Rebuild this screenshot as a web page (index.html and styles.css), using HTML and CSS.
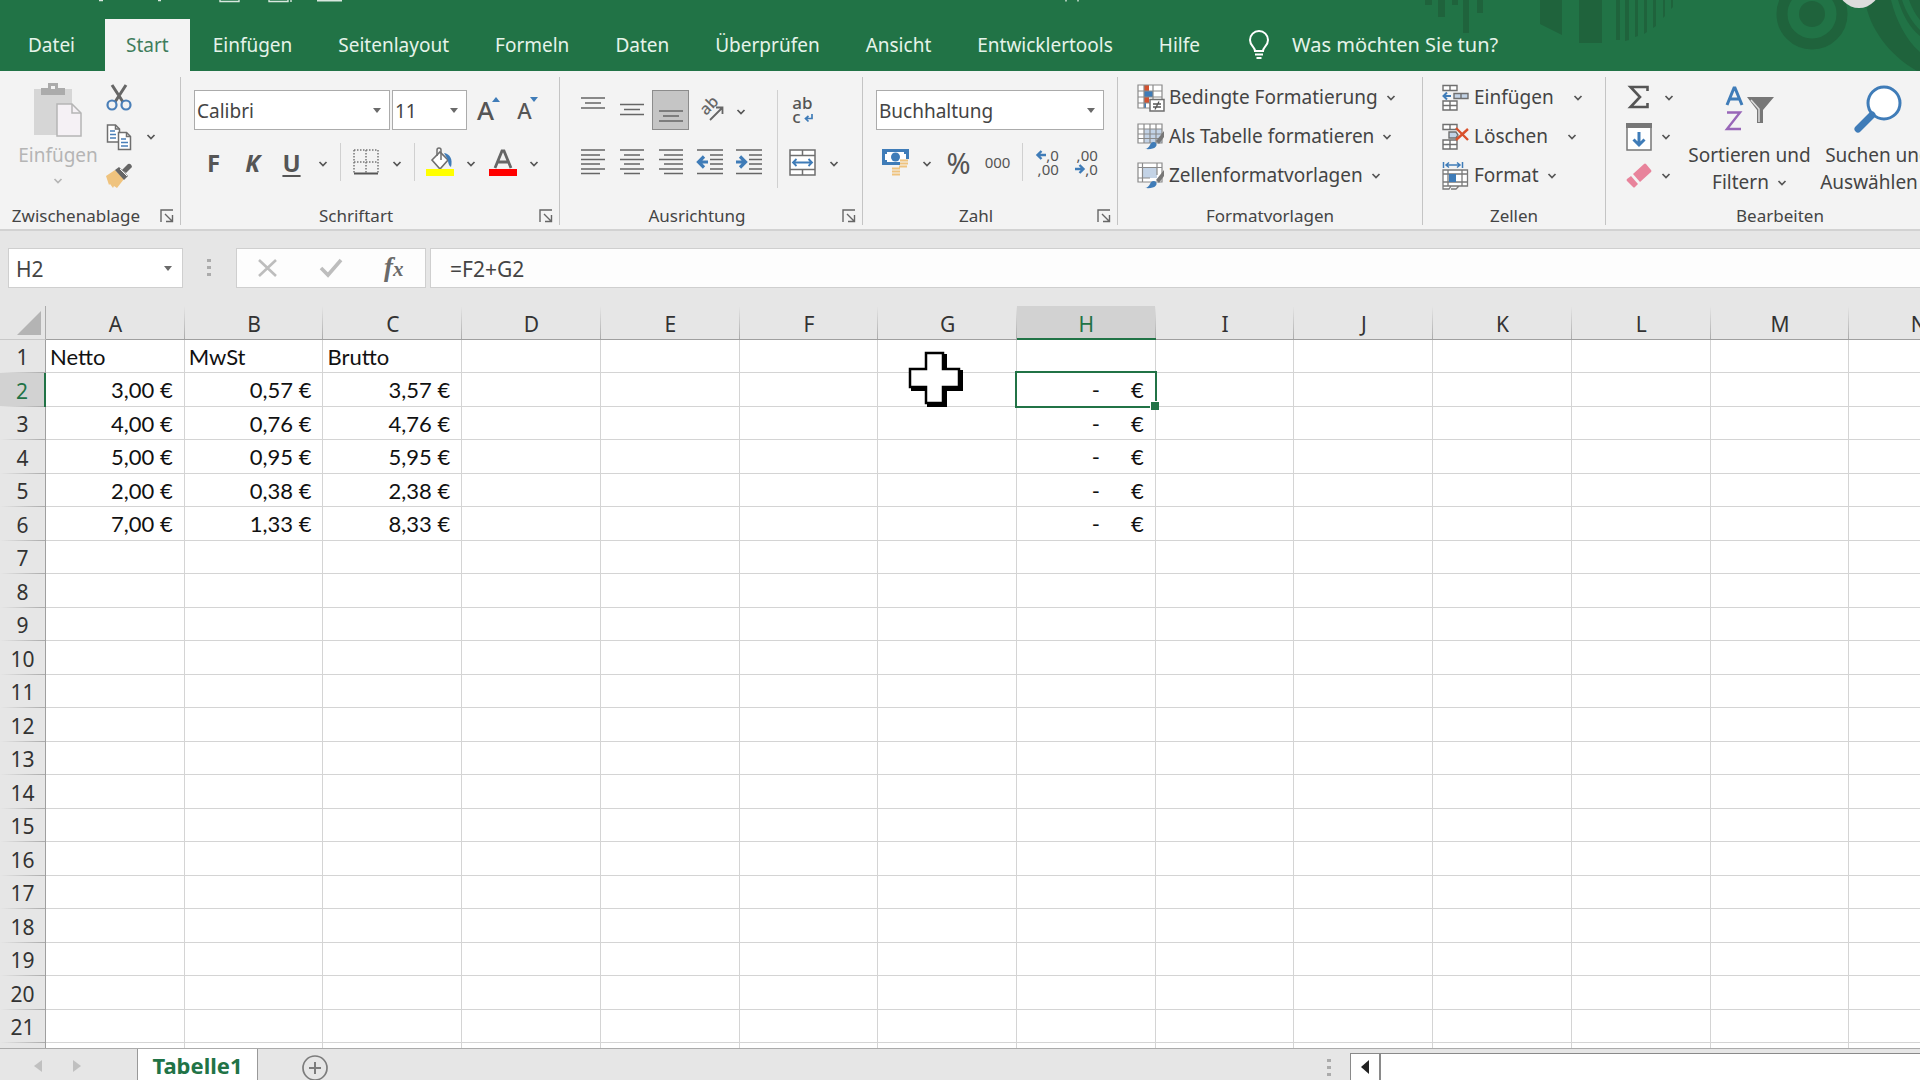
FILE: index.html
```html
<!DOCTYPE html>
<html lang="de">
<head>
<meta charset="utf-8">
<title>Excel</title>
<link rel="stylesheet" href="styles.css">
</head>
<body>
<svg class="defs" aria-hidden="true">
  <symbol id="chev" viewBox="0 0 10 8"><path d="M1.5 2 5 5.5 8.5 2" fill="none" stroke="currentColor" stroke-width="1.7"/></symbol>
  <symbol id="launch" viewBox="0 0 14 14"><path d="M1 13V1h12M5 5l7 7M12.500 6v6.500H6" fill="none" stroke="#666" stroke-width="1.400"/></symbol>
  <symbol id="tablebrush" viewBox="0 0 28 28">
    <path d="M8 26c2 0 4-2 5-4 1-3 4-4 6-2 2 3-1 7-11 6z" fill="#3f7cb8"/>
    <path d="M19 18 27 8v6l-5 7z" fill="#767676"/>
  </symbol>
</svg>

<header class="top">
  <svg class="art" viewBox="0 0 520 71" width="520" height="71" aria-hidden="true">
    <g fill="#1f633c">
      <path d="M25 0h7v5h-7zM38 0h7v17h-7zM52 0h6v5h-6zM63 0h6v33h-6zM77 0h6v13h-6zM140 0h22v35l-22-11zM179 0h23v43h-23zM216 0h4v40h-4zM225 0h4v40l-4 1zM235 0h3v36l-3 1zM244 0h3v32l-3 2zM253 0h3v26l-3 2zM263 0h2v16l-2 2zM271 0h2v7l-2 2z"/>
      <circle cx="412" cy="14" r="13"/>
      <path d="M465 0c4 28 24 55 52 71h3V52C506 40 496 20 491 0z"/>
      <path d="M498 0c5 16 12 28 22 36v-6c-8-8-14-18-18-30zM509 0c3 8 6 14 11 20V0z"/>
    </g>
    <circle cx="412" cy="14" r="30" fill="none" stroke="#1f633c" stroke-width="11"/>
    <circle cx="459" cy="-13" r="21" fill="#dcdcdc"/>
  </svg>
  <svg class="titlebits" viewBox="0 0 1100 3" width="1100" height="3" aria-hidden="true">
    <path d="M99 .5h4M158 .5h3M220 0v1.500h19V0M269 0v1.500h19V0M291 0v2M317 .8h25M1066 0v1.500M1078 0v1.500" fill="none" stroke="#d9e8df" stroke-width="1.400"/>
  </svg>
  <nav class="tabs">
    <a class="tab file" href="#">Datei</a>
    <a class="tab active" href="#">Start</a>
    <a class="tab" href="#">Einfügen</a>
    <a class="tab" href="#">Seitenlayout</a>
    <a class="tab" href="#">Formeln</a>
    <a class="tab" href="#">Daten</a>
    <a class="tab" href="#">Überprüfen</a>
    <a class="tab" href="#">Ansicht</a>
    <a class="tab" href="#">Entwicklertools</a>
    <a class="tab" href="#">Hilfe</a>
    <button class="tell" type="button">
      <svg width="22" height="30" viewBox="0 0 22 30"><path d="M7 21c0-4-5-5-5-11a9 9 0 0 1 18 0c0 6-5 7-5 11zM7 24.500h8M8.500 28h5" fill="none" stroke="#fff" stroke-width="2"/></svg>
      Was möchten Sie tun?
    </button>
  </nav>
</header>

<section class="ribbon">
  <div class="group clip">
    <div class="body flush">
      <button class="big paste" type="button" disabled>
        <span class="bigicon"><svg width="48" height="54" viewBox="0 0 48 54"><path d="M0 6h38v46H0z" fill="#d6d6d6"/><path d="M7 5h7V0h10v5h7v7H7z" fill="#ababab"/><path d="M17 3h4v3h-4z" fill="#f3f3f3"/><path d="M23 21h15l9 9v23H23z" fill="#f5f1f5" stroke="#b5b5b5" stroke-width="1.500"/><path d="M38 21v9h9" fill="none" stroke="#b5b5b5" stroke-width="1.500"/></svg></span>
        <span>Einfügen</span>
        <svg class="chev" width="10" height="8"><use href="#chev"/></svg>
      </button>
      <div class="stack">
        <div class="line">
          <button class="tool slim" type="button" aria-label="Ausschneiden"><svg width="26" height="28" viewBox="0 0 26 28"><path d="M6 1 17 18M20 1 9 18" stroke="#666" stroke-width="3"/><circle cx="6" cy="21" r="4.500" fill="none" stroke="#4a7fb8" stroke-width="2.200"/><circle cx="20" cy="21" r="4.500" fill="none" stroke="#4a7fb8" stroke-width="2.200"/></svg></button>
        </div>
        <div class="line">
          <button class="tool slim" type="button" aria-label="Kopieren"><svg width="26" height="28" viewBox="0 0 26 28"><g fill="#fff" stroke="#6f6f6f" stroke-width="1.500"><path d="M1.500 2h8l4 4v13h-12z"/><path d="M12.500 9.500h8l4 4v13h-12z"/><path d="M9.500 2v4h4M20.500 9.500v4h4" fill="none"/></g><path d="M4 8h5M4 11.500h6M4 15h6M15 16h5M15 19.500h7M15 23h7" stroke="#4a7fb8" stroke-width="1.500"/></svg></button>
          <button class="drop copy" type="button" aria-label="Kopieroptionen"><svg class="chev" width="10" height="8"><use href="#chev"/></svg></button>
        </div>
        <div class="line">
          <button class="tool slim" type="button" aria-label="Format übertragen"><svg width="26" height="26" viewBox="0 0 26 26"><path d="M0 13 9 7l9 9-7 9-3-2-1 2-3-4-1 1z" fill="#efc37e"/><path d="m9 7 4-3 9 9-4 4z" fill="#666"/><path d="m16 7 6-6q3-1 4 3l-6 6z" fill="#666"/><path d="m14 6 7 7" stroke="#f3f3f3" stroke-width="1"/></svg></button>
        </div>
      </div>
    </div>
    <div class="foot"><span>Zwischenablage</span><button type="button" aria-label="Zwischenablage öffnen"><svg width="14" height="14"><use href="#launch"/></svg></button></div>
  </div>

  <div class="group font">
    <div class="body">
      <div class="row">
        <span class="combo wide"><select aria-label="Schriftart"><option>Calibri</option></select></span>
        <span class="combo small"><select aria-label="Schriftgrad"><option>11</option></select></span>
        <button class="tool" type="button" aria-label="Schriftgrad vergrößern"><span class="letter grow">A</span><svg class="mark" width="8" height="24" viewBox="0 0 8 24"><path d="M0 7 4 2l4 5z" fill="#3f7cb8"/></svg></button>
        <button class="tool" type="button" aria-label="Schriftgrad verkleinern"><span class="letter shrink">A</span><svg class="mark" width="8" height="24" viewBox="0 0 8 24"><path d="M0 2h8L4 7z" fill="#3f7cb8"/></svg></button>
      </div>
      <div class="row">
        <button class="tool" type="button"><span class="letter bold">F</span></button>
        <button class="tool" type="button"><span class="letter bold ital">K</span></button>
        <button class="tool" type="button"><span class="letter bold under">U</span></button>
        <button class="drop" type="button" aria-label="Unterstreichung"><svg class="chev" width="10" height="8"><use href="#chev"/></svg></button>
        <i class="sep"></i>
        <button class="tool" type="button" aria-label="Rahmen"><svg width="26" height="26" viewBox="0 0 26 26"><path d="M1 1h24M1 13h24M1 1v23M13 1v23M25 1v23" fill="none" stroke="#777" stroke-width="1.500" stroke-dasharray="1.500 1.500"/><path d="M1 24.500h24" stroke="#555" stroke-width="2"/></svg></button>
        <button class="drop" type="button" aria-label="Rahmenoptionen"><svg class="chev" width="10" height="8"><use href="#chev"/></svg></button>
        <i class="sep"></i>
        <button class="tool" type="button" aria-label="Füllfarbe"><svg width="28" height="30" viewBox="0 0 28 30"><path d="M6 13 14 5l8 8-8 9z" fill="#fff" stroke="#6f6f6f" stroke-width="1.600"/><path d="M11 9V3q0-2 2-2t2 2v10" fill="none" stroke="#6f6f6f" stroke-width="1.500"/><path d="M18 6c6 1 9 6 7 14-2-1-3-4-3-7z" fill="#3f7cb8"/><path d="M0 22h28v7H0z" fill="#ff0"/></svg></button>
        <button class="drop" type="button" aria-label="Füllfarben"><svg class="chev" width="10" height="8"><use href="#chev"/></svg></button>
        <button class="tool" type="button" aria-label="Schriftfarbe"><svg width="28" height="30" viewBox="0 0 28 30"><path d="m6 21 7-17h2l7 17M9 15h10" fill="none" stroke="#666" stroke-width="2.800"/><path d="M0 22h28v7H0z" fill="#f00"/></svg></button>
        <button class="drop" type="button" aria-label="Schriftfarben"><svg class="chev" width="10" height="8"><use href="#chev"/></svg></button>
      </div>
    </div>
    <div class="foot"><span>Schriftart</span><button type="button" aria-label="Schriftart öffnen"><svg width="14" height="14"><use href="#launch"/></svg></button></div>
  </div>

  <div class="group align">
    <div class="body split">
      <div class="half">
        <div class="row">
          <button class="tool" type="button" aria-label="Oben ausrichten"><svg width="24" height="26" viewBox="0 0 24 26"><path d="M0 1h24M4 6h16M0 11h24" stroke="#666" stroke-width="1.500"/></svg></button>
          <button class="tool" type="button" aria-label="Zentriert ausrichten"><svg width="24" height="26" viewBox="0 0 24 26"><path d="M0 7.500h24M4 12.500h16M0 17.500h24" stroke="#666" stroke-width="1.500"/></svg></button>
          <button class="tool pressed" type="button" aria-label="Unten ausrichten"><svg width="24" height="26" viewBox="0 0 24 26"><path d="M0 14h24M4 19h16M0 24h24" stroke="#666" stroke-width="1.500"/></svg></button>
          <button class="tool" type="button" aria-label="Ausrichtung"><svg width="26" height="26" viewBox="0 0 26 26"><text x="9" y="19" transform="rotate(-45 9 19)" font-family="Noto Sans" font-size="16" font-weight="500" fill="#666">ab</text><path d="M13 23 25 11M19 10.500h6.500v6.500" fill="none" stroke="#666" stroke-width="1.800"/></svg></button>
          <button class="drop" type="button" aria-label="Ausrichtungsoptionen"><svg class="chev" width="10" height="8"><use href="#chev"/></svg></button>
        </div>
        <div class="row">
          <button class="tool" type="button" aria-label="Linksbündig"><svg width="24" height="26" viewBox="0 0 24 26"><path d="M0 1h24M0 6h19M0 10.500h24M0 15h19M0 20h24M0 24.500h19" stroke="#666" stroke-width="1.500"/></svg></button>
          <button class="tool" type="button" aria-label="Zentriert"><svg width="24" height="26" viewBox="0 0 24 26"><path d="M0 1h24M4 6h16M0 10.500h24M4 15h16M0 20h24M4 24.500h16" stroke="#666" stroke-width="1.500"/></svg></button>
          <button class="tool" type="button" aria-label="Rechtsbündig"><svg width="24" height="26" viewBox="0 0 24 26"><path d="M0 1h24M5 6h19M0 10.500h24M5 15h19M0 20h24M5 24.500h19" stroke="#666" stroke-width="1.500"/></svg></button>
          <button class="tool" type="button" aria-label="Einzug verkleinern"><svg width="26" height="26" viewBox="0 0 26 26"><path d="M0 1h26M13 6h13M13 10.500h13M13 15h13M13 20h13M0 24.500h26" stroke="#666" stroke-width="1.500"/><path d="M11 13H3M7 7.500 1.500 13 7 18.500" fill="none" stroke="#3f7cb8" stroke-width="3.200"/></svg></button>
          <button class="tool" type="button" aria-label="Einzug vergrößern"><svg width="26" height="26" viewBox="0 0 26 26"><path d="M0 1h26M13 6h13M13 10.500h13M13 15h13M13 20h13M0 24.500h26" stroke="#666" stroke-width="1.500"/><path d="M0 13h8M4 7.500 9.500 13 4 18.500" fill="none" stroke="#3f7cb8" stroke-width="3.200"/></svg></button>
        </div>
      </div>
      <i class="rule"></i>
      <div class="half">
        <div class="row">
          <button class="tool" type="button" aria-label="Textumbruch"><span class="wrap">ab<br>c<svg width="9" height="9" viewBox="0 0 9 9"><path d="M8 0v4.500H2M4.500 2 1.500 4.500 4.500 7.500" fill="none" stroke="#3f7cb8" stroke-width="1.700"/></svg></span></button>
        </div>
        <div class="row">
          <button class="tool" type="button" aria-label="Verbinden und zentrieren"><svg width="27" height="27" viewBox="0 0 27 27"><path d="M1 1h25v25H1zM1 6.500h25M1 20.500h25M13.500 1v5.500M13.500 20.500V26" fill="#fff" stroke="#6f6f6f" stroke-width="1.500"/><path d="M4 13.500h19M7.500 10 4 13.500 7.500 17M19.500 10l3.500 3.500-3.500 3.500" fill="none" stroke="#3f7cb8" stroke-width="1.800"/></svg></button>
          <button class="drop" type="button" aria-label="Verbindungsoptionen"><svg class="chev" width="10" height="8"><use href="#chev"/></svg></button>
        </div>
      </div>
    </div>
    <div class="foot"><span>Ausrichtung</span><button type="button" aria-label="Ausrichtung öffnen"><svg width="14" height="14"><use href="#launch"/></svg></button></div>
  </div>

  <div class="group number">
    <div class="body">
      <div class="row">
        <span class="combo full"><select aria-label="Zahlenformat"><option>Buchhaltung</option></select></span>
      </div>
      <div class="row">
        <button class="tool" type="button" aria-label="Währung"><svg width="28" height="28" viewBox="0 0 28 28"><path d="M0 1h27v16H0z" fill="#3f7cb8"/><path d="M5 4h17v2h2v6h-2v2H5v-2H3V6h2z" fill="#fff"/><circle cx="13.500" cy="9" r="4.500" fill="#3f7cb8"/><path d="M18 11h9v9h-2v7H10v-8h8z" fill="#f3f3f3"/><path d="M18 12.500h8M18 15.500h8M17 18.500h8M10 20.500h8M10 23.500h8M10 26.500h8" stroke="#efc37e" stroke-width="2"/></svg></button>
        <button class="drop" type="button" aria-label="Währungen"><svg class="chev" width="10" height="8"><use href="#chev"/></svg></button>
        <button class="tool" type="button"><span class="percent">%</span></button>
        <button class="tool" type="button"><span class="thousand">000</span></button>
        <i class="sep"></i>
        <button class="tool" type="button" aria-label="Dezimalstelle hinzufügen"><span class="dec"><span><svg width="10" height="10" viewBox="0 0 10 10"><path d="M10 5H2M5.500 1 1.500 5l4 4" fill="none" stroke="#3f7cb8" stroke-width="2.400"/></svg>,0</span><span>,00</span></span></button>
        <button class="tool" type="button" aria-label="Dezimalstelle entfernen"><span class="dec"><span>,00</span><span><svg width="10" height="10" viewBox="0 0 10 10"><path d="M0 5h8M4.500 1l4 4-4 4" fill="none" stroke="#3f7cb8" stroke-width="2.400"/></svg>,0</span></span></button>
      </div>
    </div>
    <div class="foot"><span>Zahl</span><button type="button" aria-label="Zahl öffnen"><svg width="14" height="14"><use href="#launch"/></svg></button></div>
  </div>

  <div class="group styles">
    <div class="body flush">
      <div class="stack">
        <button class="item" type="button"><svg width="28" height="28" viewBox="0 0 28 28"><path d="M1 1h24v23H1z" fill="#fff"/><path d="M7 1h5v6H7zM7 13h5v6H7z" fill="#d35230"/><path d="M7 7h9v6H7zM7 19h2v5H7z" fill="#3f7cb8"/><path d="M1 1h24v23H1zM1 7h24M1 13h24M1 19h24M7 1v23M16 1v23" fill="none" stroke="#8a8a8a" stroke-width="1.200"/><path d="M13 15.500h14V27H13z" fill="#fff" stroke="#6f6f6f" stroke-width="1.500"/><path d="M16 20h8M16 23h8M22 17.500l-4 8" stroke="#555" stroke-width="1.300"/></svg>Bedingte Formatierung<svg class="chev" width="10" height="8"><use href="#chev"/></svg></button>
        <button class="item" type="button"><svg width="28" height="28" viewBox="0 0 28 28"><path d="M1 1h24v19H1z" fill="#fff"/><path d="M7 6h18v14H7z" fill="#c3d3e6"/><path d="M1 1h24v19H1zM1 6h24M1 11h24M1 15.500h24M7 1v19M13 1v19M19 1v19" fill="none" stroke="#8a8a8a" stroke-width="1.200"/><use href="#tablebrush"/></svg>Als Tabelle formatieren<svg class="chev" width="10" height="8"><use href="#chev"/></svg></button>
        <button class="item" type="button"><svg width="28" height="28" viewBox="0 0 28 28"><path d="M1 1h24v19H1z" fill="#fff"/><path d="M5.500 5.500H20V16H5.500z" fill="#c3d3e6"/><path d="M1 1h24v19H1zM1 5.500h24M5.500 1v19M1 16h12M20 1v12" fill="none" stroke="#8a8a8a" stroke-width="1.200"/><use href="#tablebrush"/></svg>Zellenformatvorlagen<svg class="chev" width="10" height="8"><use href="#chev"/></svg></button>
      </div>
    </div>
    <div class="foot plain"><span>Formatvorlagen</span></div>
  </div>

  <div class="group cells">
    <div class="body flush">
      <div class="stack">
        <div class="line"><button class="item" type="button"><svg width="28" height="28" viewBox="0 0 28 28"><path d="M1 1.500h14v5H1zM8 1.500v5M1 17h14v9H1zM8 17v9M1 21.500h14" fill="#fff" stroke="#6f6f6f" stroke-width="1.400"/><path d="M12 9.500h14v5H12zM19 9.500v5" fill="#c3d3e6" stroke="#6f6f6f" stroke-width="1.400"/><path d="M9 12H2M5 8.500 1.500 12 5 15.500" fill="none" stroke="#3f7cb8" stroke-width="2"/></svg>Einfügen</button><button class="drop late" type="button" aria-label="Einfügeoptionen"><svg class="chev" width="10" height="8"><use href="#chev"/></svg></button></div>
        <div class="line"><button class="item" type="button"><svg width="28" height="28" viewBox="0 0 28 28"><path d="M1 1.500h14v5H1zM8 1.500v5M1 17h14v9H1zM8 17v9M1 21.500h14" fill="#fff" stroke="#6f6f6f" stroke-width="1.400"/><path d="M7 9h7l2 3-2 3H7z" fill="#c3d3e6" stroke="#6f6f6f" stroke-width="1.400"/><path d="m14 5 12 12M26 6 14 17" stroke="#d9512c" stroke-width="2.400"/></svg>Löschen</button><button class="drop late" type="button" aria-label="Löschoptionen"><svg class="chev" width="10" height="8"><use href="#chev"/></svg></button></div>
        <button class="item" type="button"><svg width="28" height="28" viewBox="0 0 28 28"><path d="M1.500 0v6M20.500 0v6M4 3h14M7 .5 4 3l3 2.500M15 .5 18 3l-3 2.500" fill="none" stroke="#3f7cb8" stroke-width="1.500"/><path d="M1 8h24.500v16H1zM1 12h24.500M1 20h24.500M6 8v16M20 8v16M1 24v3h6l2-3M9 27h5l3-3" fill="#fff" stroke="#7a7a7a" stroke-width="1.300"/><path d="M7 12h7v8H7z" fill="#3f7cb8"/></svg>Format<svg class="chev" width="10" height="8"><use href="#chev"/></svg></button>
      </div>
    </div>
    <div class="foot plain"><span>Zellen</span></div>
  </div>

  <div class="group edit">
    <div class="body flush">
      <div class="stack">
        <div class="line"><button class="tool" type="button" aria-label="Summe"><svg width="22" height="24" viewBox="0 0 22 24"><path d="M19.500 5V1H2.500L12 11 2.500 21h17v-4" fill="none" stroke="#555" stroke-width="2.600"/></svg></button><button class="drop far" type="button" aria-label="Summenoptionen"><svg class="chev" width="10" height="8"><use href="#chev"/></svg></button></div>
        <div class="line"><button class="tool" type="button" aria-label="Füllbereich"><svg width="26" height="28" viewBox="0 0 26 28"><path d="M1 1h24v26H1z" fill="#fff" stroke="#777" stroke-width="1.500"/><path d="M0 0h26v5H0z" fill="#777"/><path d="M13 9v13M7.500 16.500 13 22l5.500-5.500" fill="none" stroke="#3f7cb8" stroke-width="3"/></svg></button><button class="drop near" type="button" aria-label="Fülloptionen"><svg class="chev" width="10" height="8"><use href="#chev"/></svg></button></div>
        <div class="line"><button class="tool" type="button" aria-label="Löschen"><svg width="26" height="26" viewBox="0 0 26 26"><path d="M7 11 18 1q1-1 2 0l5 6q1 1 0 2L14 19z" fill="#e8839b"/><path d="m5 13 7 8-3 3q-1 1-2 0l-6-6q-1-1 0-2z" fill="#e8839b"/></svg></button><button class="drop near" type="button" aria-label="Löschoptionen"><svg class="chev" width="10" height="8"><use href="#chev"/></svg></button></div>
      </div>
      <button class="big sort" type="button">
        <span class="bigicon"><svg width="50" height="50" viewBox="0 0 50 50"><path d="m2 20 7-17h1l7 17M5 14h9" fill="none" stroke="#3f7cb8" stroke-width="3"/><path d="M2 27.500h13L2 44h14" fill="none" stroke="#9866b8" stroke-width="2.400"/><path d="M22 12h27L38 25v13h-6V25z" fill="#777"/><path d="M26 15 34 24v13" fill="none" stroke="#ddd" stroke-width="1.500"/></svg></span>
        <span>Sortieren und</span>
        <span class="withchev">Filtern <svg class="chev" width="10" height="8"><use href="#chev"/></svg></span>
      </button>
      <button class="big find" type="button">
        <span class="bigicon"><svg width="48" height="50" viewBox="0 0 48 50"><circle cx="30" cy="18" r="16" fill="#fff" stroke="#3f7cb8" stroke-width="3"/><path d="M18 30 4 44" stroke="#3f7cb8" stroke-width="7" stroke-linecap="round"/></svg></span>
        <span>Suchen und</span>
        <span class="withchev">Auswählen <svg class="chev" width="10" height="8"><use href="#chev"/></svg></span>
      </button>
    </div>
    <div class="foot plain"><span>Bearbeiten</span></div>
  </div>
</section>

<section class="formula">
  <span class="combo name"><input type="text" value="H2" aria-label="Namenfeld"></span>
  <svg class="dots" width="4" height="20" viewBox="0 0 4 20" aria-hidden="true"><path d="M0 1h4v3H0zM0 8h4v3H0zM0 15h4v3H0z" fill="#ababab"/></svg>
  <div class="fxbox">
    <button type="button" aria-label="Abbrechen"><svg width="20" height="20" viewBox="0 0 20 20"><path d="m1 2 17 16M18 2 1 18" stroke="#bdbdbd" stroke-width="2.600"/></svg></button>
    <button type="button" aria-label="Eingeben"><svg width="24" height="20" viewBox="0 0 24 20"><path d="m2 10 7 7L22 2" fill="none" stroke="#bdbdbd" stroke-width="3.600"/></svg></button>
    <button type="button"><span class="fx">f<small>x</small></span></button>
  </div>
  <input class="bar" type="text" value="=F2+G2" aria-label="Bearbeitungsleiste">
</section>

<main class="sheet">
<table>
<colgroup><col class="rowcol"><col span="14" class="datacol"></colgroup>
<thead><tr><td class="corner"><svg width="24" height="24" viewBox="0 0 24 24" aria-hidden="true"><path d="M24 0v24H0z" fill="#b4b4b4"/></svg></td><th scope="col">A</th><th scope="col">B</th><th scope="col">C</th><th scope="col">D</th><th scope="col">E</th><th scope="col">F</th><th scope="col">G</th><th scope="col" class="on">H</th><th scope="col">I</th><th scope="col">J</th><th scope="col">K</th><th scope="col">L</th><th scope="col">M</th><th scope="col">N</th></tr></thead>
<tbody>
<tr><th scope="row">1</th><td class="txt">Netto</td><td class="txt">MwSt</td><td class="txt">Brutto</td><td><td><td><td><td><td><td><td><td><td><td></tr>
<tr><th scope="row" class="on">2</th><td>3,00 €</td><td>0,57 €</td><td>3,57 €</td><td><td><td><td class="host"><svg class="cursor" width="58" height="58" viewBox="0 0 58 58" aria-hidden="true"><path d="M20 4h18v16h16v19H38v16H20V39H4V20h16z" fill="#000" stroke="#000" stroke-width="2"/><path d="M18 2h17v16h16v18H35v16H18V36H2V18h16z" fill="#fff" stroke="#000" stroke-width="2.500"/></svg></td><td class="host sel"><span class="dash">-</span>€</td><td><td><td><td><td><td></tr>
<tr><th scope="row">3</th><td>4,00 €</td><td>0,76 €</td><td>4,76 €</td><td><td><td><td><td><span class="dash">-</span>€</td><td><td><td><td><td><td></tr>
<tr><th scope="row">4</th><td>5,00 €</td><td>0,95 €</td><td>5,95 €</td><td><td><td><td><td><span class="dash">-</span>€</td><td><td><td><td><td><td></tr>
<tr><th scope="row">5</th><td>2,00 €</td><td>0,38 €</td><td>2,38 €</td><td><td><td><td><td><span class="dash">-</span>€</td><td><td><td><td><td><td></tr>
<tr><th scope="row">6</th><td>7,00 €</td><td>1,33 €</td><td>8,33 €</td><td><td><td><td><td><span class="dash">-</span>€</td><td><td><td><td><td><td></tr>
<tr><th scope="row">7</th><td><td><td><td><td><td><td> <td><td><td><td><td><td><td></tr>
<tr><th scope="row">8</th><td><td><td><td><td><td><td> <td><td><td><td><td><td><td></tr>
<tr><th scope="row">9</th><td><td><td><td><td><td><td> <td><td><td><td><td><td><td></tr>
<tr><th scope="row">10</th><td><td><td><td><td><td><td> <td><td><td><td><td><td><td></tr>
<tr><th scope="row">11</th><td><td><td><td><td><td><td> <td><td><td><td><td><td><td></tr>
<tr><th scope="row">12</th><td><td><td><td><td><td><td> <td><td><td><td><td><td><td></tr>
<tr><th scope="row">13</th><td><td><td><td><td><td><td> <td><td><td><td><td><td><td></tr>
<tr><th scope="row">14</th><td><td><td><td><td><td><td> <td><td><td><td><td><td><td></tr>
<tr><th scope="row">15</th><td><td><td><td><td><td><td> <td><td><td><td><td><td><td></tr>
<tr><th scope="row">16</th><td><td><td><td><td><td><td> <td><td><td><td><td><td><td></tr>
<tr><th scope="row">17</th><td><td><td><td><td><td><td> <td><td><td><td><td><td><td></tr>
<tr><th scope="row">18</th><td><td><td><td><td><td><td> <td><td><td><td><td><td><td></tr>
<tr><th scope="row">19</th><td><td><td><td><td><td><td> <td><td><td><td><td><td><td></tr>
<tr><th scope="row">20</th><td><td><td><td><td><td><td> <td><td><td><td><td><td><td></tr>
<tr><th scope="row">21</th><td><td><td><td><td><td><td> <td><td><td><td><td><td><td></tr>
<tr><th scope="row"></th><td><td><td><td><td><td><td> <td><td><td><td><td><td><td></tr>
</tbody>
</table>
</main>

<footer class="sheetbar">
  <div class="nav">
    <button type="button" aria-label="Vorheriges Blatt"><svg width="8" height="12" viewBox="0 0 8 12"><path d="M8 0v12L0 6z" fill="#c0c0c0"/></svg></button>
    <button type="button" aria-label="Nächstes Blatt"><svg width="8" height="12" viewBox="0 0 8 12"><path d="M0 0v12l8-6z" fill="#c0c0c0"/></svg></button>
  </div>
  <a class="sheettab" href="#">Tabelle1</a>
  <button class="add" type="button" aria-label="Neues Blatt"><svg width="26" height="26" viewBox="0 0 26 26"><circle cx="13" cy="13" r="12" fill="none" stroke="#7c7c7c" stroke-width="1.700"/><path d="M7 13h12M13 7v12" stroke="#7c7c7c" stroke-width="2"/></svg></button>
  <div class="scroll">
    <svg class="dots" width="4" height="20" viewBox="0 0 4 20" aria-hidden="true"><path d="M0 1h4v3H0zM0 8h4v3H0zM0 15h4v3H0z" fill="#ababab"/></svg>
    <button type="button" aria-label="Nach links"><svg width="8" height="14" viewBox="0 0 8 14"><path d="M8 0v14L0 7z" fill="#222"/></svg></button>
    <div class="track"></div>
  </div>
</footer>
</body>
</html>
```
FILE: styles.css
```css
* { box-sizing: border-box; }
body {
  margin: 0;
  height: 100vh;
  display: flex;
  flex-direction: column;
  overflow: hidden;
  background: #e6e6e6;
  color: #444;
  font-family: "Noto Sans", "Open Sans", sans-serif;
  font-size: 19px;
  line-height: 27px;
}
button, input, select { font: inherit; color: inherit; }
button {
  border: 0;
  padding: 0;
  background: none;
  display: flex;
  align-items: center;
  justify-content: center;
}
svg { display: block; flex: none; overflow: visible; }
.defs { display: none; }
.chev { color: #555; }

/* Tab strip */
.top { position: relative; flex: none; background: #217346; padding-top: 19px; }
.art { position: absolute; top: 0; right: 0; overflow: hidden; }
.titlebits { position: absolute; top: 0; left: 0; overflow: hidden; }
.tabs { position: relative; display: flex; height: 52px; }
.tab {
  display: flex;
  align-items: center;
  padding: 0 23px;
  color: #e6f3ea;
  text-decoration: none;
  white-space: nowrap;
}
.tab.file { padding: 0 30px 0 28px; }
.tab.active { background: #f3f3f3; color: #3f7d5c; padding: 0 21px; }
.tell { color: #e6f3ea; font-size: 20px; line-height: 26px; gap: 22px; margin-left: 25px; white-space: nowrap; }

/* Ribbon */
.ribbon {
  flex: none;
  display: flex;
  height: 160px;
  padding: 6px 0;
  background: #f3f3f3;
  border-bottom: 2px solid #d2d2d2;
  overflow: hidden;
}
.group {
  flex: none;
  display: flex;
  flex-direction: column;
  height: 148px;
  border-right: 1px solid #c4c4c4;
}
.clip { width: 181px; }
.font { width: 379px; }
.align { width: 303px; }
.number { width: 255px; }
.styles { width: 305px; }
.cells { width: 183px; }
.edit { width: 348px; border: 0; }
.body { flex: 1; padding: 13px 0 0 13px; }
.body.flush { display: flex; padding-top: 1px; }
.body.split { display: flex; }
.row { display: flex; align-items: center; height: 40px; margin-bottom: 12px; }
.stack { display: flex; flex-direction: column; }
.line { display: flex; height: 39px; }
.foot { flex: none; display: flex; align-items: center; height: 20px; margin-bottom: -1px; font-size: 17px; line-height: 20px; }
.foot span { flex: 1; text-align: center; }
.foot button { width: 28px; height: 18px; justify-content: flex-start; padding-left: 8px; }

.tool { flex: none; width: 39px; height: 40px; }
.line .tool { height: 39px; }
.tool.slim { width: 32px; }
.tool.pressed { width: 37px; margin: 0 1px; background: #c5c5c5; border: 1px solid #8c8c8c; }
.drop { flex: none; width: 24px; height: 40px; padding-top: 3px; }
.line .drop { height: 39px; padding-top: 0; }
.drop.copy { margin-left: 4px; }
.drop.near { width: 16px; }
.drop.far { width: 22px; }
.drop.late { width: 20px; margin-left: 14px; }
.sep { flex: none; width: 1px; height: 38px; margin: 0 5px; background: #d0d0d0; }
.rule { flex: none; width: 1px; height: 98px; margin: 0 5px 0 9px; background: #d0d0d0; }

.combo { position: relative; display: flex; height: 40px; background: #fff; border: 1px solid #ababab; }
.combo::after {
  content: "";
  position: absolute;
  right: 8px;
  top: 17px;
  border: 4px solid transparent;
  border-top: 5px solid #6a6a6a;
  pointer-events: none;
}
.combo select, .combo input {
  appearance: none;
  width: 100%;
  border: 0;
  background: transparent;
  padding: 2px 2px 0;
  outline: 0;
}
.combo.wide { width: 196px; margin-right: 2px; }
.combo.small { width: 75px; margin-right: 2px; }
.combo.full { width: 228px; }

.letter { color: #555; }
.letter.grow { font-size: 26px; font-weight: 500; }
.letter.shrink { font-size: 22px; font-weight: 500; }
.letter.bold { font-size: 24px; font-weight: 700; }
.letter.ital { font-style: italic; }
.letter.under { text-decoration: underline; text-decoration-thickness: 2px; text-underline-offset: 3px; }
.mark { align-self: flex-start; margin: 5px 0 0 -2px; }
.wrap { font-size: 17px; line-height: 14px; font-weight: 500; color: #555; text-align: left; }
.wrap svg { display: inline-block; margin-left: 3px; }
.percent { font-size: 29px; color: #555; }
.thousand { font-size: 15px; color: #555; }
.dec { display: flex; flex-direction: column; align-items: flex-end; font-size: 15px; line-height: 14px; color: #555; }
.dec span { display: flex; align-items: center; }

.styles .body { padding-left: 19px; }
.cells .body { padding-left: 19px; }
.item { height: 39px; justify-content: flex-start; white-space: nowrap; color: #444; }
.item > svg:first-child { margin-right: 4px; }
.item > .chev { margin-left: 8px; }

.big { flex-direction: column; justify-content: flex-start; white-space: nowrap; color: #444; }
.bigicon { display: flex; align-items: center; height: 64px; }
.paste { width: 90px; color: #b5b5b5; }
.paste .chev { color: #b5b5b5; margin-top: 8px; }
.sort { width: 131px; margin-left: 4px; }
.find { width: 126px; }
.withchev { display: flex; align-items: center; gap: 8px; }

/* Formula bar */
.formula { flex: none; display: flex; height: 75px; padding: 17px 0 18px 8px; font-size: 21px; }
.combo.name { width: 175px; border-color: #cfcfcf; }
.combo.name input { padding-left: 7px; }
.formula .dots { margin: 10px 25px 0 24px; }
.combo.name::after { right: 10px; }
.fxbox { display: flex; width: 190px; background: #fdfdfd; border: 1px solid #cfcfcf; margin-right: 4px; }
.fxbox button { flex: 1; }
.fx { font-family: "Liberation Serif", serif; font-style: italic; font-weight: 700; font-size: 27px; color: #6a6a6a; }
.fx small { font-size: 21px; }
.bar { flex: 1; min-width: 0; border: 1px solid #cfcfcf; border-right: 0; background: #fdfdfd; padding: 2px 19px 0; outline: 0; }

/* Worksheet */
.sheet { flex: 1; min-height: 0; overflow: hidden; background: #fff; }
table {
  --col: 7.225vw;
  table-layout: fixed;
  width: calc(46px + 14 * var(--col));
  border-collapse: separate;
  border-spacing: 0;
}
.rowcol { width: 46px; }
.datacol { width: var(--col); }
th { font-size: 21px; font-weight: 400; color: #333; padding: 0; background-color: #e6e6e6; background-repeat: no-repeat; }
thead tr { height: 34px; }
thead th {
  padding-top: 4px;
  border-bottom: 1px solid #9f9f9f;
  background-image: linear-gradient(#e6e6e6, #ababab);
  background-position: right;
  background-size: 1px 100%;
}
thead th.on { background-color: #d2d2d2; border-bottom: 2px solid #217346; color: #217346; }
thead .corner { height: 34px; padding: 0 4px 0 0; background: #e6e6e6; border-right: 1px solid #ababab; border-bottom: 1px solid #c8c8c8; }
.corner svg { margin-left: auto; }
tbody tr { height: 33px; }
tbody tr:nth-child(even) { height: 34px; }
tbody th {
  padding-top: 2px;
  border-right: 1px solid #9f9f9f;
  background-image: linear-gradient(to right, #e6e6e6, #ababab);
  background-position: bottom;
  background-size: 100% 1px;
}
tbody th.on { background-color: #d2d2d2; border-right: 2px solid #217346; color: #217346; }
tbody td {
  padding: 0 11px 0 4px;
  border-right: 1px solid #d4d4d4;
  border-bottom: 1px solid #d4d4d4;
  text-align: right;
  color: #111;
  font-family: Lato, sans-serif;
  font-size: 22px;
  white-space: nowrap;
}
tbody td.txt { text-align: left; }
.dash { margin-right: 31px; }
.host { position: relative; }
.cursor { position: absolute; left: 30px; top: -22px; z-index: 1; }
.sel::before { content: ""; position: absolute; inset: -2px; border: 2px solid #217346; }
.sel::after { content: ""; position: absolute; right: -4px; bottom: -4px; width: 8px; height: 8px; background: #217346; border: 1px solid #fff; border-width: 1px 0 0 1px; }

/* Sheet tabs */
.sheetbar { flex: none; display: flex; height: 32px; border-top: 1px solid #ababab; overflow: hidden; }
.nav { width: 137px; padding: 3px 0 0 18px; display: flex; }
.nav button { width: 39px; }
.sheettab {
  width: 121px;
  margin-top: -1px;
  padding-top: 4px;
  background: #fff;
  border: 1px solid #999;
  border-width: 0 1px;
  color: #217346;
  font-size: 22px;
  font-weight: 700;
  text-align: center;
  text-decoration: none;
}
.add { margin: 6px 0 0 44px; height: 26px; }
.scroll { margin-left: auto; width: 31%; display: flex; padding-top: 4px; }
.scroll .dots { margin: 5px 19px 0 2px; }
.scroll button { width: 30px; background: #fff; border: 1px solid #8a8a8a; border-bottom: 0; }
.track { flex: 1; background: #fff; border-top: 1px solid #8a8a8a; border-left: 1px solid #8a8a8a; }
```
